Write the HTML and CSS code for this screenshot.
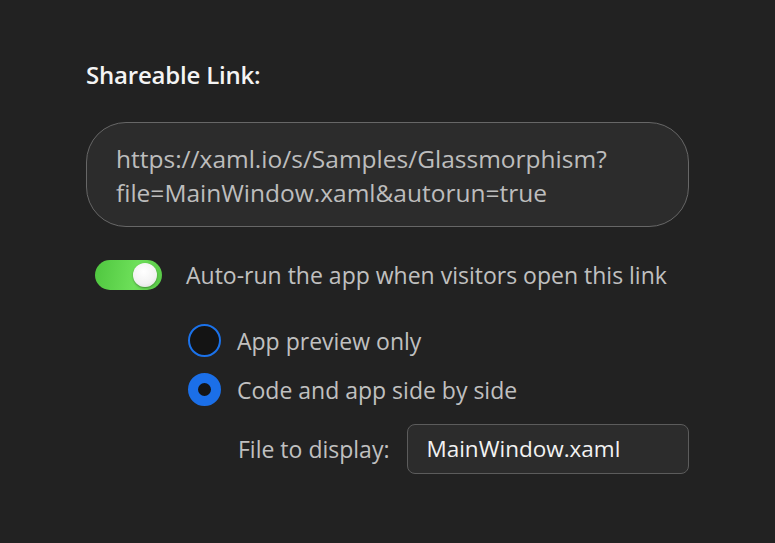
FILE: index.html
```html
<!DOCTYPE html>
<html lang="en">

<head>
    <meta charset="UTF-8">
    <meta name="viewport" content="width=device-width, initial-scale=1.0">
    <title>Share</title>
    <link rel="stylesheet" href="styles.css">
</head>

<body>
    <div class="share-panel">
        <div class="share-title">Shareable Link:</div>

        <div class="link-box">
            https://xaml.io/s/Samples/Glassmorphism?<br>
            file=MainWindow.xaml&amp;autorun=true
        </div>

        <div class="toggle-row">
            <span class="toggle on"><span class="knob"></span></span>
            <span class="label">Auto-run the app when visitors open this link</span>
        </div>

        <div class="options">
            <div class="radio-row">
                <span class="radio"></span>
                <span class="label">App preview only</span>
            </div>
            <div class="radio-row">
                <span class="radio checked"></span>
                <span class="label">Code and app side by side</span>
            </div>
            <div class="file-row">
                <span class="label">File to display:</span>
                <div class="file-input">MainWindow.xaml</div>
            </div>
        </div>
    </div>
</body>

</html>
```

FILE: styles.css
```css
html,
body {
    margin: 0;
    height: 100%;
    background: #222222;
}

body {
    font-family: "Open Sans", "Noto Sans", sans-serif;
    color: #c4c4c4;
}

.share-panel {
    padding: 60px 86px 0 86px;
    width: 603px;
}

.share-title {
    font-size: 24px;
    font-weight: 600;
    color: #f4f4f4;
    line-height: 30px;
    letter-spacing: -0.2px;
}

.link-box {
    margin-top: 32px;
    height: 105px;
    box-sizing: border-box;
    padding: 19px 29px;
    border: 1.5px solid #676767;
    border-radius: 40px;
    background: #2c2c2c;
    font-size: 24.5px;
    line-height: 34px;
    color: #bdbdbd;
    white-space: nowrap;
}

.toggle-row {
    display: flex;
    align-items: center;
    gap: 24px;
    margin-top: 33px;
    padding-left: 9px;
}

.label {
    font-size: 23px;
    line-height: 30px;
    color: #c0c0c0;
    white-space: nowrap;
}

.toggle {
    width: 67px;
    height: 30px;
    border-radius: 15px;
    background: linear-gradient(100deg, #4fc63f 0%, #6ee05a 60%, #58c847 100%);
    position: relative;
    flex: none;
}

.toggle .knob {
    position: absolute;
    right: 5px;
    top: 3px;
    width: 24px;
    height: 24px;
    border-radius: 50%;
    background: radial-gradient(circle at 45% 35%, #ffffff 0%, #f2f2f2 60%, #d6d6d6 100%);
    box-shadow: 0 1px 2px rgba(0, 0, 0, 0.35);
}

.options {
    padding-left: 102px;
    margin-top: 34px;
}

.radio-row {
    display: flex;
    align-items: center;
    gap: 16px;
    height: 33px;
    margin-bottom: 16px;
}

.radio {
    width: 33px;
    height: 33px;
    box-sizing: border-box;
    border-radius: 50%;
    border: 2px solid #1b72ea;
    background: #141414;
    flex: none;
}

.radio.checked {
    border: 10.5px solid #1b6fe8;
    background: #141414;
}

.file-row {
    display: flex;
    align-items: center;
    gap: 18px;
    padding-left: 50px;
    margin-top: 18px;
}

.file-input {
    width: 284px;
    height: 50px;
    box-sizing: border-box;
    border: 1.5px solid #5c5c5c;
    border-radius: 8px;
    background: #2c2c2c;
    padding-left: 18px;
    font-size: 22.5px;
    line-height: 47px;
    color: #f2f2f2;
}
```
